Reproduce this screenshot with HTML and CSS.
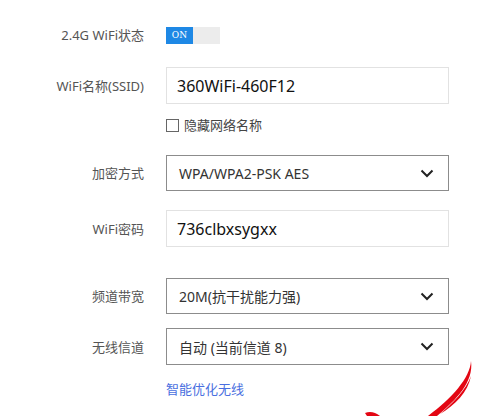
FILE: index.html
```html
<!DOCTYPE html>
<html>
<head>
<meta charset="utf-8">
<link rel="stylesheet" href="styles.css">
</head>
<body>
<div class="form">
  <div class="row r-toggle">
    <div class="label">2.4G WiFi状态</div>
    <div class="toggle"><span class="on">ON</span><span class="off"></span></div>
  </div>
  <div class="row r-field r-ssid">
    <div class="label">WiFi名称(SSID)</div>
    <div class="input">360WiFi-460F12</div>
  </div>
  <div class="row r-check">
    <div class="label"></div>
    <div class="check"><span class="box"></span><span class="ctext">隐藏网络名称</span></div>
  </div>
  <div class="row r-field r-enc">
    <div class="label">加密方式</div>
    <div class="select"><span>WPA/WPA2-PSK AES</span>
      <svg class="chev" width="14" height="9" viewBox="0 0 14 9"><path d="M1.5 1.5 L7 7 L12.5 1.5" fill="none" stroke="#222" stroke-width="2"/></svg>
    </div>
  </div>
  <div class="row r-field r-pwd">
    <div class="label">WiFi密码</div>
    <div class="input">736clbxsygxx</div>
  </div>
  <div class="row r-field r-band">
    <div class="label">频道带宽</div>
    <div class="select"><span>20M(抗干扰能力强)</span>
      <svg class="chev" width="14" height="9" viewBox="0 0 14 9"><path d="M1.5 1.5 L7 7 L12.5 1.5" fill="none" stroke="#222" stroke-width="2"/></svg>
    </div>
  </div>
  <div class="row r-field r-chan">
    <div class="label">无线信道</div>
    <div class="select"><span>自动 (当前信道 8)</span>
      <svg class="chev" width="14" height="9" viewBox="0 0 14 9"><path d="M1.5 1.5 L7 7 L12.5 1.5" fill="none" stroke="#222" stroke-width="2"/></svg>
    </div>
  </div>
  <div class="row r-link">
    <div class="label"></div>
    <a class="link">智能优化无线</a>
  </div>
</div>
<svg class="marks" width="140" height="66" viewBox="360 350 140 66">
  <path d="M471 361 C470 378 452 398 428 416 L437 416 C456 400 474 382 471 361 Z" fill="#e30613"/>
  <path d="M471 376 C466 390 452 404 440 414 C455 405 468 392 471 376 Z" fill="#e30613"/>
  <path d="M365 413 C370 411 375 412 380 416 L367 416 Z" fill="#e30613"/>
</svg>
</body>
</html>
```
FILE: styles.css
```css
html, body {
  margin: 0;
  padding: 0;
  background: #fff;
}
body {
  width: 500px;
  height: 416px;
  overflow: hidden;
  position: relative;
  font-family: "Noto Sans", "Noto Sans CJK SC", sans-serif;
  color: #333;
}
.form {
  display: flex;
  flex-direction: column;
  padding-top: 26px;
}
.row {
  display: flex;
  align-items: center;
  gap: 22px;
}
.label {
  width: 144px;
  flex: none;
  text-align: right;
  font-size: 13px;
  line-height: 18px;
  color: #555;
  white-space: nowrap;
}
.toggle {
  display: flex;
  width: 54px;
  height: 17px;
}
.toggle .on {
  width: 27px;
  background: #1e88e5;
  color: #fff;
  font-family: "DejaVu Serif", serif;
  font-size: 9px;
  line-height: 17px;
  text-align: center;
}
.toggle .off {
  width: 27px;
  background: #ececec;
}
.r-ssid { margin-top: 23px; }
.r-check { margin-top: 14px; }
.r-enc { margin-top: 22px; }
.r-pwd { margin-top: 19px; }
.r-band { margin-top: 31px; }
.r-chan { margin-top: 14px; }
.r-link { margin-top: 15px; }
.input, .select {
  box-sizing: border-box;
  width: 283px;
  height: 37px;
  display: flex;
  align-items: center;
}
.input {
  border: 1px solid #e2e2e2;
  padding-left: 10px;
  font-size: 16px;
  color: #111;
}
.select {
  height: 36px;
  border: 1px solid #8c8c8c;
  padding: 0 14px 0 12px;
  font-size: 14px;
  color: #333;
  justify-content: space-between;
}
.r-chan .select { height: 37px; }
.check {
  display: flex;
  align-items: center;
  gap: 5px;
  font-size: 13px;
  line-height: 15px;
  color: #444;
  height: 15px;
}
.check .box {
  box-sizing: border-box;
  width: 13px;
  height: 13px;
  border: 1px solid #666;
  background: #fff;
}
.link {
  font-size: 13px;
  color: #4a6fe0;
  line-height: 18px;
}
.marks {
  position: absolute;
  right: 0;
  bottom: 0;
}
```
